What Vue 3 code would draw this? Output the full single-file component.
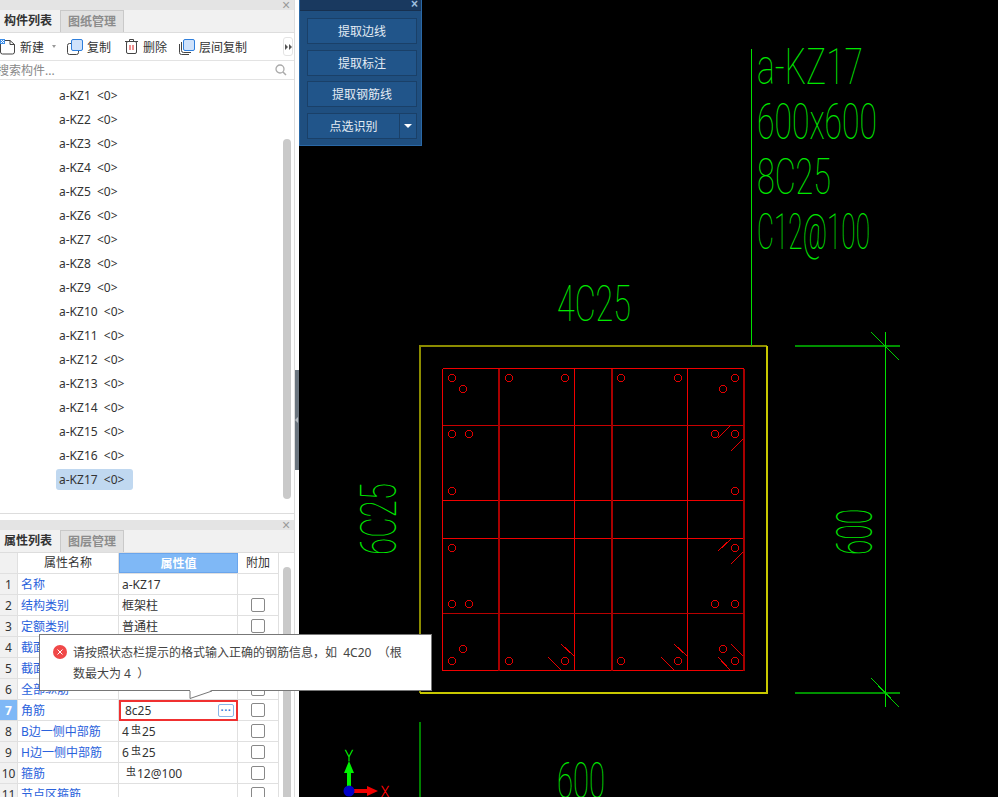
<script setup>
const components = Array.from({ length: 17 }, (_, i) => `a-KZ${i + 1}  <0>`)

const rows = [
  { n: 1, name: '名称', value: 'a-KZ17', noCheck: true },
  { n: 2, name: '结构类别', value: '框架柱' },
  { n: 3, name: '定额类别', value: '普通柱' },
  { n: 4, name: '截面宽度(B边)(mm)', value: '600' },
  { n: 5, name: '截面高度(H边)(mm)', value: '600' },
  { n: 6, name: '全部纵筋', value: '' },
  { n: 7, name: '角筋', value: '8c25', active: true },
  { n: 8, name: 'B边一侧中部筋', count: '4', size: '25' },
  { n: 9, name: 'H边一侧中部筋', count: '6', size: '25' },
  { n: 10, name: '箍筋', count: '', size: '12@100', indent: true },
  { n: 11, name: '节点区箍筋', value: '' }
]

const buttons = ['提取边线', '提取标注', '提取钢筋线']

const tipText = '请按照状态栏提示的格式输入正确的钢筋信息，如  4C20  （根数最大为 4  ）'

const circles = [
  [452, 378], [463, 389], [509, 378], [565, 378], [452, 434], [469, 434], [452, 491],
  [621, 378], [678, 378], [735, 378], [723, 389], [715, 434], [735, 434], [735, 491],
  [452, 548], [452, 604], [469, 604], [463, 649], [452, 661], [509, 661], [565, 661],
  [735, 548], [715, 604], [735, 604], [723, 649], [735, 661], [678, 661], [621, 661]
]

const slashes = [
  [718, 438, 731, 425], [731, 451, 743, 439], [548, 657, 561, 670], [561, 644, 574, 656],
  [718, 551, 731, 539], [731, 564, 743, 552], [661, 657, 674, 670], [674, 644, 687, 656],
  [718, 657, 730, 670], [731, 644, 743, 656]
]

const labels = [
  { t: 'a-KZ17', x: 757, y: 84, w: 106 },
  { t: '600x600', x: 757, y: 139, w: 120 },
  { t: '8C25', x: 757, y: 194, w: 74 },
  { t: 'C12@100', x: 757, y: 249, w: 113 },
  { t: '4C25', x: 557, y: 321, w: 74 },
  { t: '600', x: 557, y: 798, w: 48 },
  { t: '6C25', x: 396, y: 555, w: 72, r: true },
  { t: '600', x: 872, y: 555, w: 46, r: true }
]
</script>

<template>
  <div class="app">
    <aside class="side">
      <div class="panel-head"><span class="close">×</span></div>
      <div class="tabs">
        <span class="tab on">构件列表</span>
        <span class="tab">图纸管理</span>
      </div>
      <div class="toolbar">
        <span class="tool t-new">
          <svg class="ic" width="15" height="16" viewBox="0 0 15 16">
            <path d="M0.5 1.5H10L14.5 5.5V13a2 2 0 0 1-2 2H2.5a2 2 0 0 1-2-2Z" fill="#fff" stroke="#444" />
            <path d="M10 1.5V5.5H14.5" fill="none" stroke="#444" />
            <rect x="0" y="0" width="5" height="5" fill="#3f8fe8" />
            <path d="M1 1h1v1H1zM3 1h1v1H3zM2 2h1v1H2zM1 3h1v1H1zM3 3h1v1H3z" fill="#fff" />
          </svg>
          <span>新建</span>
          <i class="caret"></i>
        </span>
        <span class="tool t-copy">
          <svg class="ic" width="16" height="16" viewBox="0 0 16 16">
            <rect x="0.5" y="4.5" width="11" height="11" rx="2" fill="#fff" stroke="#444" />
            <rect x="4.5" y="0.5" width="11" height="11" rx="1.5" fill="#cfe2fb" stroke="#2f7fdc" />
          </svg>
          <span>复制</span>
        </span>
        <span class="tool t-del">
          <svg class="ic" width="13" height="15" viewBox="0 0 13 15">
            <path d="M0 2.5H13M4.5 2.5V0.5H8.5V2.5" fill="none" stroke="#444" />
            <rect x="1.5" y="2.5" width="10" height="12" rx="1.5" fill="#fff" stroke="#444" />
            <path d="M5 6V11M8 6V11" stroke="#e02020" />
          </svg>
          <span>删除</span>
        </span>
        <span class="tool t-layer">
          <svg class="ic" width="16" height="16" viewBox="0 0 16 16">
            <path d="M0.5 5V13.5A2 2 0 0 0 2.5 15.5H10" fill="none" stroke="#444" />
            <path d="M2.5 3V11.5A2 2 0 0 0 4.5 13.5H12" fill="none" stroke="#444" />
            <rect x="4.5" y="0.5" width="11" height="11" rx="1.5" fill="#cfe2fb" stroke="#2f7fdc" />
          </svg>
          <span>层间复制</span>
        </span>
        <span class="more"><i class="tri"></i><i class="tri"></i></span>
      </div>
      <div class="search">
        <span class="search-text">搜索构件...</span>
        <svg width="12" height="12" viewBox="0 0 12 12">
          <circle cx="5" cy="5" r="4" fill="none" stroke="#aaa" stroke-width="1.3" />
          <path d="M8 8L11 11" stroke="#aaa" stroke-width="1.5" />
        </svg>
      </div>
      <div class="list-wrap">
        <ul class="list">
          <li v-for="(c, i) in components" :key="c" class="item" :class="{ sel: i === 16 }">{{ c }}</li>
        </ul>
        <div class="track track-list"><div class="thumb thumb-list"></div></div>
      </div>
      <div class="sep"></div>
      <div class="panel-head"><span class="close">×</span></div>
      <div class="tabs">
        <span class="tab on">属性列表</span>
        <span class="tab">图层管理</span>
      </div>
      <div class="props">
        <div class="table">
          <div class="row head">
            <div class="num"></div>
            <div class="name-h">属性名称</div>
            <div class="val-h">属性值</div>
            <div class="ext-h">附加</div>
          </div>
          <div v-for="r in rows" :key="r.n" class="row">
            <div class="num" :class="{ 'num-on': r.active }">{{ r.n }}</div>
            <div class="name">{{ r.name }}</div>
            <div class="val" :class="{ 'val-on': r.active, 'val-in': r.indent }">
              <template v-if="r.size">{{ r.count }}<span class="bar">虫</span>{{ r.size }}</template>
              <template v-else>{{ r.value }}</template>
              <span v-if="r.active" class="dots">···</span>
            </div>
            <div class="ext"><i v-if="!r.noCheck" class="check"></i></div>
          </div>
        </div>
        <div class="track"><div class="thumb thumb-props"></div></div>
      </div>
    </aside>

    <div class="splitter">
      <div class="handle"><i class="handle-arrow"></i></div>
    </div>

    <main class="canvas">
      <svg class="cad" width="699" height="797" viewBox="299 0 699 797">
        <g shape-rendering="crispEdges" fill="none">
          <path d="M420 693V346H767" stroke="#8c8c00" stroke-width="2" />
          <path d="M767 346V693H420" stroke="#c8c800" stroke-width="2" />

          <g stroke="#f00000">
            <path d="M442.5 368.5H744M442.5 670.5H744M442.5 368.5V670.5" />
            <path d="M574.5 368.5V670.5M687.5 368.5V670.5" />
            <path d="M442.5 500.5H744M442.5 538.5H744" />
          </g>
          <path d="M442.5 425.5H744" stroke="#c80000" />
          <path d="M442.5 613.5H744" stroke="#b80000" />
          <path d="M499 368.5V670.5M612 368.5V670.5M744 368.5V670.5" stroke="#a80000" stroke-width="2" />

          <line v-for="(s, i) in slashes" :key="'s' + i" :x1="s[0]" :y1="s[1]" :x2="s[2]" :y2="s[3]" stroke="#e80000" />
          <circle v-for="(c, i) in circles" :key="'c' + i" :cx="c[0]" :cy="c[1]" r="3.5" stroke="#e00000" />

          <path d="M751.5 49V346" stroke="#00e000" />
          <path d="M795 346H900M795 693H900" stroke="#009000" stroke-width="2" />
          <path d="M885.5 332V707" stroke="#00e000" />
          <path d="M871 332L899 360M871 678L899 707" stroke="#00d000" />
          <path d="M420 722V797" stroke="#008000" stroke-width="2" />
        </g>

        <text
          v-for="(l, i) in labels"
          :key="'l' + i"
          class="cad-text"
          :x="l.x"
          :y="l.y"
          :textLength="l.w"
          lengthAdjust="spacingAndGlyphs"
          :transform="l.r ? `rotate(-90 ${l.x} ${l.y})` : undefined"
        >{{ l.t }}</text>

        <rect x="347" y="771" width="4" height="16" fill="#00f000" />
        <path d="M349 761L354 773H344Z" fill="#00f000" />
        <rect x="352" y="789" width="16" height="4" fill="#f00000" />
        <path d="M378 791L367 786V796Z" fill="#f00000" />
        <circle cx="349" cy="791" r="5.5" fill="#0000c8" />
        <text class="axis axis-y" x="345" y="761" textLength="8" lengthAdjust="spacingAndGlyphs">Y</text>
        <text class="axis axis-x" x="381" y="797" textLength="8" lengthAdjust="spacingAndGlyphs">X</text>
      </svg>

      <section class="float">
        <div class="float-head"><span class="float-x">×</span></div>
        <div class="float-body">
          <button v-for="b in buttons" :key="b" class="fbtn">{{ b }}</button>
          <div class="fsplit">
            <button class="fbtn fmain">点选识别</button>
            <button class="fbtn fdrop"><i class="fcaret"></i></button>
          </div>
        </div>
      </section>
    </main>

    <div class="tip">
      <svg class="tip-ic" width="14" height="14" viewBox="0 0 14 14">
        <circle cx="7" cy="7" r="7" fill="#f04848" />
        <path d="M4.5 4.5L9.5 9.5M9.5 4.5L4.5 9.5" stroke="#fff" stroke-width="1" />
      </svg>
      <p class="tip-text">{{ tipText }}</p>
      <svg class="tip-arrow" width="24" height="10" viewBox="0 0 24 10">
        <path d="M1 0V8.5L23 0" fill="#fff" />
        <path d="M1 1V8.5L23 1" fill="none" stroke="#777" />
      </svg>
    </div>
  </div>
</template>

<style>
html, body { margin: 0; background: #000; overflow: hidden; }
</style>

<style scoped>
.app {
  position: relative;
  display: flex;
  width: 998px;
  height: 797px;
  overflow: hidden;
  font-family: "Noto Sans", "Noto Sans CJK SC", sans-serif;
  font-size: 12px;
  color: #333;
  background: #000;
}

.side {
  width: 295px;
  flex: none;
  height: 797px;
  display: flex;
  flex-direction: column;
  background: #fff;
  overflow: hidden;
  box-sizing: border-box;
  border-right: 1px solid #ddd;
}

.panel-head {
  height: 10px;
  flex: none;
  background: #e4e4e4;
  display: flex;
  justify-content: flex-end;
  padding-right: 3px;
}
.close {
  font: 14px/10px "Liberation Sans", sans-serif;
  color: #999;
  width: 9px;
}

.tabs {
  height: 23px;
  flex: none;
  box-sizing: border-box;
  display: flex;
  background: #f1f1f1;
  border-bottom: 1px solid #ddd;
}
.tab {
  width: 64px;
  box-sizing: border-box;
  border: 1px solid #c9c9c9;
  border-width: 1px 1px 0 1px;
  background: #e2e2e2;
  color: #8c8c8c;
  font-weight: 700;
  text-align: center;
  line-height: 21px;
}
.tab.on {
  width: 60px;
  border: 0;
  background: #f1f1f1;
  color: #333;
  padding-left: 4px;
  text-align: left;
  line-height: 22px;
}

.toolbar {
  height: 28px;
  flex: none;
  box-sizing: border-box;
  display: flex;
  align-items: center;
  border-bottom: 1px solid #e3e3e3;
  background: #fff;
}
.tool { display: flex; align-items: center; }
.t-new { gap: 5px; }
.t-copy { gap: 4px; margin-left: 11px; }
.t-del { gap: 5px; margin-left: 14px; }
.t-layer { gap: 4px; margin-left: 12px; }
.ic { display: block; flex: none; }
.caret {
  width: 0;
  height: 0;
  margin-left: 3px;
  border: 2px solid transparent;
  border-top: 3px solid #999;
  border-bottom: 0;
}
.more {
  margin-left: 36px;
  width: 10px;
  height: 19px;
  box-sizing: border-box;
  border: 1px solid #e4e4e4;
  border-radius: 3px;
  display: flex;
  align-items: center;
  justify-content: center;
  gap: 1px;
}
.tri {
  width: 0;
  height: 0;
  border: 3px solid transparent;
  border-left: 3px solid #555;
  border-right: 0;
}

.search {
  height: 19px;
  flex: none;
  box-sizing: border-box;
  display: flex;
  align-items: center;
  justify-content: space-between;
  padding-right: 7px;
  border-bottom: 1px solid #e3e3e3;
}
.search-text { margin-left: -3px; color: #888; }

.list-wrap {
  height: 434px;
  flex: none;
  display: flex;
  box-sizing: border-box;
  border-bottom: 1px solid #ddd;
}
.list {
  flex: 1;
  list-style: none;
  margin: 0;
  padding: 4px 0 0 56px;
}
.item {
  width: 77px;
  height: 24px;
  box-sizing: border-box;
  padding: 0 0 0 3px;
  line-height: 24px;
  white-space: pre;
  border-radius: 3px;
}
.item.sel {
  background: #c0d8f0;
  height: 21px;
  line-height: 21px;
  margin-top: 1px;
}

.track {
  width: 16px;
  flex: none;
  overflow: hidden;
  padding-left: 4px;
  box-sizing: border-box;
}
.track-list { padding-left: 5px; }
.thumb {
  width: 8px;
  background: #c9c9c9;
  border-radius: 4px;
}
.thumb-list { height: 360px; margin-top: 59px; }
.thumb-props { height: 300px; margin-top: 14px; }

.sep { height: 6px; flex: none; background: #fff; }

.props {
  flex: 1;
  display: flex;
  min-height: 0;
  overflow: hidden;
}
.table { width: 279px; flex: none; }
.row {
  display: grid;
  grid-template-columns: 18px 101px 119px 41px;
  height: 21px;
  box-sizing: border-box;
  border-bottom: 1px solid #e0e0e0;
  line-height: 22px;
}
.row > div {
  box-sizing: border-box;
  border-right: 1px solid #e0e0e0;
  height: 20px;
  white-space: nowrap;
  overflow: hidden;
}
.num { background: #f1f1f1; text-align: center; }
.num-on { background: #7fb8f6; color: #fff; font-weight: 700; }
.name { color: #2a62dc; padding-left: 3px; }
.val { padding-left: 3px; position: relative; }
.val-in { padding-left: 5px; }
.bar { font-size: 10px; position: relative; top: -3px; margin: 0 1px 0 2px; }
.row > .val-on {
  height: 21px;
  margin-bottom: -1px;
  border: 2px solid #f03030;
  padding-left: 4px;
  line-height: 18px;
  display: flex;
  align-items: center;
  justify-content: space-between;
  padding-right: 2px;
  overflow: visible;
  position: relative;
}
.dots {
  width: 16px;
  height: 13px;
  box-sizing: border-box;
  border: 1px solid #8ab6e8;
  border-radius: 2px;
  color: #3a7fd8;
  font: 700 11px/10px "Liberation Sans", sans-serif;
  text-align: center;
}
.ext {
  display: flex;
  align-items: center;
  justify-content: center;
}
.check {
  width: 14px;
  height: 14px;
  box-sizing: border-box;
  border: 1px solid #888;
  border-radius: 2px;
  background: #fff;
}
.head > div { text-align: center; height: 20px; }
.head { height: 21px; line-height: 20px; }
.row > .val-h {
  background: #7fb8f6;
  color: #fff;
  font-weight: 700;
  border: 1px solid #6aa5ec;
}

.splitter {
  width: 4px;
  flex: none;
  background: #fff;
  padding-top: 370px;
  box-sizing: border-box;
}
.handle {
  height: 100px;
  background: #6c7680;
  display: flex;
  align-items: center;
}
.handle-arrow {
  width: 0;
  height: 0;
  border: 3px solid transparent;
  border-left: 0;
  border-right: 3px solid #b8bec4;
}

.canvas {
  position: relative;
  flex: 1;
  background: #000;
  overflow: hidden;
}
.cad { display: block; }
.cad-text {
  font-family: Roboto, sans-serif;
  font-weight: 100;
  font-size: 50px;
  fill: #00e800;
}
.axis {
  font-family: Roboto, sans-serif;
  font-weight: 100;
  font-size: 15px;
  stroke-width: 0.5px;
}
.axis-y { fill: #00ff00; stroke: #00ff00; }
.axis-x { fill: #ff0000; stroke: #ff0000; }

.float {
  position: absolute;
  left: 0;
  top: 0;
  width: 123px;
  height: 146px;
  box-sizing: border-box;
  background: #1f4f80;
  border: 1px solid #2a68a6;
  border-top: 0;
}
.float-head {
  height: 10px;
  background: #19395f;
  border-bottom: 1px solid #17304f;
  text-align: right;
  padding-right: 3px;
}
.float-x {
  display: block;
  font: 700 12px/9px "Liberation Sans", sans-serif;
  color: #9fc0e0;
}
.float-body {
  display: flex;
  flex-direction: column;
  gap: 6px;
  padding: 7px 4px 0 7px;
}
.fbtn {
  height: 26px;
  padding: 0;
  box-sizing: border-box;
  background: #21558a;
  border: 1px solid #1a4068;
  color: #e4ecf4;
  font: inherit;
  display: block;
  width: 100%;
}
.fbtn:nth-child(3) { margin-top: -1px; }
.fsplit { display: flex; }
.fmain { flex: 1; width: auto; }
.fdrop {
  width: 17px;
  flex: none;
  border-left: 0;
  display: flex;
  align-items: center;
  justify-content: center;
}
.fcaret {
  width: 0;
  height: 0;
  border: 4px solid transparent;
  border-top: 4px solid #fff;
  border-bottom: 0;
}

.tip {
  position: absolute;
  left: 39px;
  top: 634px;
  width: 393px;
  height: 57px;
  box-sizing: border-box;
  background: #fff;
  border: 1px solid #777;
  padding: 7px 26px 0 33px;
  color: #444;
}
.tip-ic { position: absolute; left: 13px; top: 10px; }
.tip-text {
  margin: 0;
  line-height: 21px;
  font-size: 12px;
  white-space: pre-wrap;
}
.tip-arrow { position: absolute; left: 149px; top: 55px; }
</style>
